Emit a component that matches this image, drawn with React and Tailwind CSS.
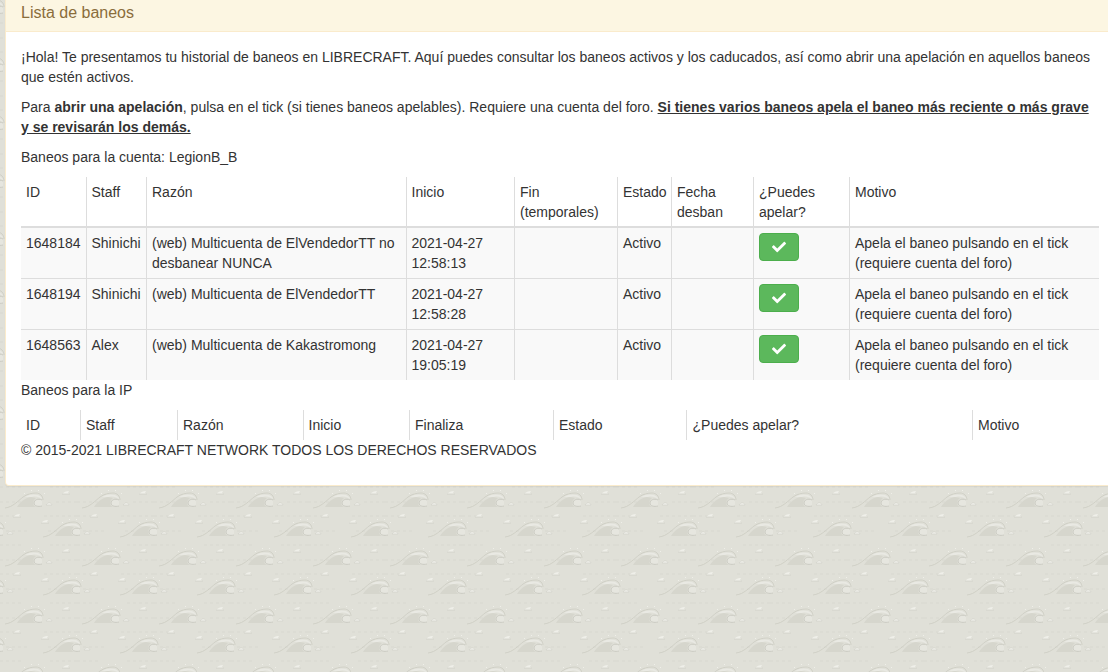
import { FaCheck } from 'react-icons/fa';

const bans = [
    { id: '1648184', staff: 'Shinichi', reason: '(web) Multicuenta de ElVendedorTT no desbanear NUNCA', date: '2021-04-27 12:58:13' },
    { id: '1648194', staff: 'Shinichi', reason: '(web) Multicuenta de ElVendedorTT', date: '2021-04-27 12:58:28' },
    { id: '1648563', staff: 'Alex', reason: '(web) Multicuenta de Kakastromong', date: '2021-04-27 19:05:19' },
];

const accountCols = [
    ['ID', 'w-[65px]'],
    ['Staff', 'w-[60px]'],
    ['Razón', 'w-[260px]'],
    ['Inicio', 'w-[108px]'],
    ['Fin (temporales)', 'w-[103px]'],
    ['Estado', 'w-[54px]'],
    ['Fecha desban', 'w-[82px]'],
    ['¿Puedes apelar?', 'w-[96px]'],
    ['Motivo', 'w-[250px]'],
];

const ipCols = [
    ['ID', 'w-[59px]'],
    ['Staff', 'w-[97px]'],
    ['Razón', 'w-[126px]'],
    ['Inicio', 'w-[106px]'],
    ['Finaliza', 'w-[144px]'],
    ['Estado', 'w-[133px]'],
    ['¿Puedes apelar?', 'w-[286px]'],
    ['Motivo', 'w-[127px]'],
];

const cell = 'pl-[5.5px] pr-[5px] py-[5px] align-top font-normal text-left border-l border-[#ddd] first:border-l-0 first:pl-[5px]';

const WavePattern = () => (
    <svg className="absolute inset-0 w-full h-full" aria-hidden="true">
        <defs>
            <g id="wave">
                <path d="M12 14C15 9 20 5 26 4L31 5C27 8 27 12 31 14Z" fill="#d6d6cd" />
                <path d="M0 15C8 14 13 8 18 4C22 1 27 0 31 0C35 0 38 3 38 7" fill="none" stroke="#c8c8bf" strokeWidth="0.7" />
                <path d="M20 4C24 1 29 1 33 2C36 3 37 5 37 6C34 4 31 3 27 4Z" fill="#e9e9e3" />
                <path d="M37 7C33 5 29 7 29 10C29 13 33 14 37 13" fill="#e6e6df" stroke="#cbcbc2" strokeWidth="1" />
                <path d="M41 12C43 9 46 9 47 12Z" fill="#efefe9" stroke="#cbcbc2" strokeWidth="0.5" />
                <path d="M19 0h1v1h-1zM26-3h1v1h-1zM33-3h1v1h-1zM39 0h1v1h-1z" fill="#efefe9" />
            </g>
            <g id="crest">
                <path d="M0 3C2 1 4 0 7 0L6 2L8 3Z" fill="#efefe9" />
                <path d="M0 3H8" stroke="#c8c8bf" strokeWidth="0.6" />
            </g>
            <pattern id="waves" width="77" height="58" patternUnits="userSpaceOnUse">
                <rect width="77" height="58" fill="#e0e0d8" />
                <path d="M0 9H30M48 9H77M0 23H24M50 23H77M0 38H36M56 38H77M0 52H18M44 52H77" stroke="#d9d9d1" strokeWidth="1" strokeDasharray="3 3" />
                <use href="#wave" x="5" y="29" />
                <use href="#wave" x="43" y="0" />
                <use href="#wave" x="-34" y="0" />
                <use href="#wave" x="43" y="58" />
                <use href="#wave" x="-34" y="58" />
                <use href="#crest" x="62" y="27" />
                <use href="#crest" x="13" y="50" />
                <use href="#crest" x="41" y="56" />
                <use href="#crest" x="41" y="-2" />
            </pattern>
        </defs>
        <rect width="100%" height="100%" fill="url(#waves)" />
    </svg>
);

const HeaderRow = ({ cols, className }) => (
    <tr>
        {cols.map(([label]) => (
            <th key={label} className={`${cell} ${className}`}>{label}</th>
        ))}
    </tr>
);

const Cols = ({ cols }) => (
    <colgroup>
        {cols.map(([label, width]) => (
            <col key={label} className={width} />
        ))}
    </colgroup>
);

const App = () => {
    return (
        <div className="relative w-[1108px] h-[672px] overflow-hidden font-['Liberation_Sans',Arial,sans-serif] text-sm leading-5 text-[#333]">
            <WavePattern />
            <div className="relative ml-[5px] bg-white border-l border-b border-[#faebcc] rounded-bl shadow-[0_1px_1px_rgba(0,0,0,0.05)]">
                <div className="h-8 pl-[15px] pt-px bg-[#fcf6e2] border-b border-[#faebcc] text-base text-[#8a6d3b]">
                    Lista de baneos
                </div>
                <div className="pl-[15px] pr-[9px] pt-[15px] pb-[15px]">
                    <p className="mb-2.5">
                        ¡Hola! Te presentamos tu historial de baneos en LIBRECRAFT. Aquí puedes consultar los baneos activos y los caducados, así como abrir una apelación en aquellos baneos que estén activos.
                    </p>
                    <p className="mb-2.5">
                        Para <b>abrir una apelación</b>, pulsa en el tick (si tienes baneos apelables). Requiere una cuenta del foro. <b className="underline">Si tienes varios baneos apela el baneo más reciente o más grave y se revisarán los demás.</b>
                    </p>
                    <p className="mb-2.5">Baneos para la cuenta: LegionB_B</p>

                    <table className="w-[1078px] table-fixed [&_tr>*:nth-child(2)]:pl-[5px] [&_tr>*:nth-child(4)]:pl-[5px]">
                        <Cols cols={accountCols} />
                        <thead className="border-b-2 border-[#ddd]">
                            <HeaderRow cols={accountCols} className="pb-1" />
                        </thead>
                        <tbody>
                            {bans.map((ban) => (
                                <tr key={ban.id} className="bg-[#f9f9f9] border-t border-[#ddd] first:border-t-0">
                                    <td className={cell}>{ban.id}</td>
                                    <td className={cell}>{ban.staff}</td>
                                    <td className={cell}>{ban.reason}</td>
                                    <td className={cell}>{ban.date}</td>
                                    <td className={cell}></td>
                                    <td className={cell}>Activo</td>
                                    <td className={cell}></td>
                                    <td className={cell}>
                                        <button className="flex items-center justify-center w-10 h-7 bg-[#5cb85c] border border-[#4cae4c] rounded text-white">
                                            <FaCheck className="w-3.5 h-3.5" />
                                        </button>
                                    </td>
                                    <td className={cell}>Apela el baneo pulsando en el tick (requiere cuenta del foro)</td>
                                </tr>
                            ))}
                        </tbody>
                    </table>

                    <p className="mb-2.5">Baneos para la IP</p>

                    <table className="w-[1078px] table-fixed [&_tr>*:nth-child(4)]:pl-[5px] [&_tr>*:nth-child(7)]:pl-[6px]">
                        <Cols cols={ipCols} />
                        <thead>
                            <HeaderRow cols={ipCols} className="" />
                        </thead>
                    </table>

                    <p className="mb-2.5">© 2015-2021 LIBRECRAFT NETWORK TODOS LOS DERECHOS RESERVADOS</p>
                </div>
            </div>
        </div>
    );
};

export default App;
